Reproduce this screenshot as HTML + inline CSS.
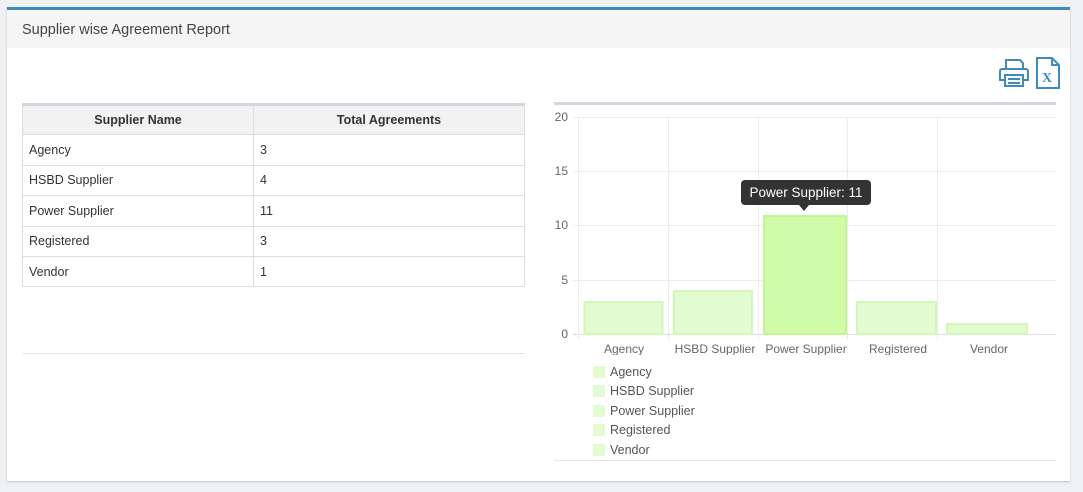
<!DOCTYPE html>
<html><head><style>
body{margin:0;width:1083px;height:492px;background:#f0f1f3;font-family:"Liberation Sans",sans-serif;position:relative;overflow:hidden}
.card{position:absolute;left:7px;top:7px;width:1063px;height:471px;background:#fff;border-top:3px solid #3c8dbc;box-shadow:0 1px 2px rgba(0,0,0,.2)}
.hdr{position:absolute;left:0;top:0;right:0;height:38px;background:#f5f5f5;font-size:14.5px;color:#444;line-height:40px;padding-left:15px}
.a{position:absolute}
table{border-collapse:collapse;position:absolute;left:22px;top:103px;width:503px;font-size:12.5px;color:#333;border-top:3px solid #d2d6de}
tr{height:30.4px}
td,th{border:1px solid #ddd;padding:0 6px}
th{background:#f2f2f2;font-weight:bold;text-align:center}
.lg{position:absolute;left:593px;width:12px;height:12px;background:#e2fbd0}
.lt{position:absolute;left:610px;font-size:12.5px;color:#555}
</style></head><body>
<div class="card"><div class="hdr">Supplier wise Agreement Report</div></div>
<svg class="a" style="left:998px;top:57px" width="32" height="32" viewBox="0 0 32 32" fill="none" stroke="#3c8dbc" stroke-width="2"><path d="M8 12V3h14l3 3v6M4 12h24a2 2 0 0 1 2 2v9h-5M7 23H2v-9a2 2 0 0 1 2-2M7 18h18v11H7zM10 22h12M10 26h12"/></svg>
<svg class="a" style="left:1035px;top:57px" width="26" height="32" viewBox="0 0 26 32" fill="none" stroke="#3c8dbc" stroke-width="2"><path d="M2 1h15l7 7v23H2zM17 1v7h7"/><text x="7" y="25" font-family="Liberation Serif" font-size="14" font-weight="bold" fill="#3c8dbc" stroke="none">X</text></svg>
<table>
<tr><th style="width:218px">Supplier Name</th><th>Total Agreements</th></tr>
<tr><td>Agency</td><td>3</td></tr>
<tr><td>HSBD Supplier</td><td>4</td></tr>
<tr><td>Power Supplier</td><td>11</td></tr>
<tr><td>Registered</td><td>3</td></tr>
<tr><td>Vendor</td><td>1</td></tr>
</table>
<div class="a" style="left:22px;top:353px;width:503px;height:1px;background:#e5e5e5"></div>
<div class="a" style="left:554px;top:102px;width:502px;height:3px;background:#d2d6de"></div>
<svg class="a" style="left:540px;top:105px" width="530" height="250" font-family="Liberation Sans" font-size="12" fill="#666">
<g stroke="#ececec" stroke-width="1">
<line x1="33" y1="12.5" x2="516" y2="12.5"/><line x1="33" y1="66.5" x2="516" y2="66.5"/><line x1="33" y1="120.5" x2="516" y2="120.5"/><line x1="33" y1="175.5" x2="516" y2="175.5"/>
<line x1="38.5" y1="12" x2="38.5" y2="235"/><line x1="128.5" y1="12" x2="128.5" y2="235"/><line x1="218.5" y1="12" x2="218.5" y2="235"/><line x1="307.5" y1="12" x2="307.5" y2="235"/><line x1="397.5" y1="12" x2="397.5" y2="235"/>
<line x1="33" y1="229.5" x2="516" y2="229.5" stroke="#ddd"/>
</g>
<text x="28" y="16" text-anchor="end">20</text><text x="28" y="70" text-anchor="end">15</text><text x="28" y="124" text-anchor="end">10</text><text x="28" y="179" text-anchor="end">5</text><text x="28" y="233" text-anchor="end">0</text>
<g fill="#e2fbd0" stroke="#d3f7b8" stroke-width="2">
<rect x="44.5" y="197" width="78" height="32"/><rect x="134" y="186" width="78" height="43"/><rect x="224" y="111" width="82" height="118" fill="#d0fba8" stroke="#c4f595"/><rect x="317" y="197" width="79" height="32"/><rect x="407" y="219" width="80" height="10"/>
</g>
<g text-anchor="middle"><text x="84" y="248">Agency</text><text x="175" y="248">HSBD Supplier</text><text x="266" y="248">Power Supplier</text><text x="358" y="248">Registered</text><text x="449" y="248">Vendor</text></g>
<rect x="201" y="75" width="130" height="25" rx="4" fill="#333"/><path d="M259 100l5 6 5-6z" fill="#333"/>
<text x="266" y="92" text-anchor="middle" fill="#fff" font-size="13.5">Power Supplier: 11</text>
</svg>
<div class="lg" style="top:366px"></div><div class="lt" style="top:365px">Agency</div>
<div class="lg" style="top:385px"></div><div class="lt" style="top:384px">HSBD Supplier</div>
<div class="lg" style="top:405px"></div><div class="lt" style="top:404px">Power Supplier</div>
<div class="lg" style="top:424px"></div><div class="lt" style="top:423px">Registered</div>
<div class="lg" style="top:444px"></div><div class="lt" style="top:443px">Vendor</div>
<div class="a" style="left:554px;top:460px;width:502px;height:1px;background:#e5e5e5"></div>
</body></html>
